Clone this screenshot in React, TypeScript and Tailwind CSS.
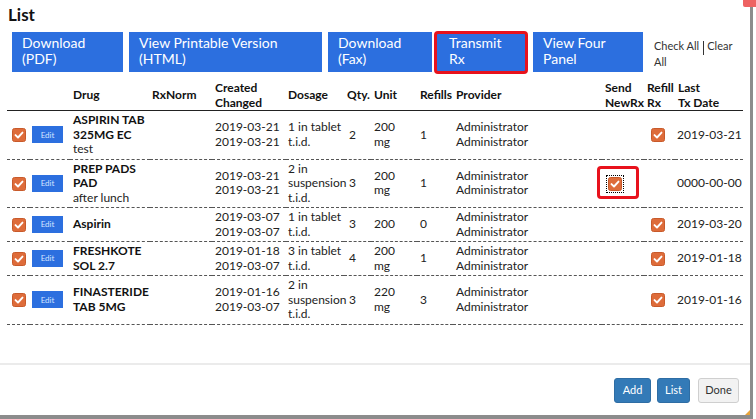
import React from 'react';

type Row = {
    drug: string[];
    note?: string;
    created: string;
    changed: string;
    dosage: string[];
    qty: string;
    unit: string[];
    refills: string;
    send: boolean;
    refill: boolean;
    last: string;
};

const rows: Row[] = [
    { drug: ['ASPIRIN TAB', '325MG EC'], note: 'test', created: '2019-03-21', changed: '2019-03-21', dosage: ['1 in tablet', 't.i.d.'], qty: '2', unit: ['200', 'mg'], refills: '1', send: false, refill: true, last: '2019-03-21' },
    { drug: ['PREP PADS', 'PAD'], note: 'after lunch', created: '2019-03-21', changed: '2019-03-21', dosage: ['2 in', 'suspension', 't.i.d.'], qty: '3', unit: ['200', 'mg'], refills: '1', send: true, refill: false, last: '0000-00-00' },
    { drug: ['Aspirin'], created: '2019-03-07', changed: '2019-03-07', dosage: ['1 in tablet', 't.i.d.'], qty: '3', unit: ['200'], refills: '0', send: false, refill: true, last: '2019-03-20' },
    { drug: ['FRESHKOTE', 'SOL 2.7'], created: '2019-01-18', changed: '2019-03-07', dosage: ['3 in tablet', 't.i.d.'], qty: '4', unit: ['200', 'mg'], refills: '1', send: false, refill: true, last: '2019-01-18' },
    { drug: ['FINASTERIDE', 'TAB 5MG'], created: '2019-01-16', changed: '2019-03-07', dosage: ['2 in', 'suspension', 't.i.d.'], qty: '3', unit: ['220', 'mg'], refills: '3', send: false, refill: true, last: '2019-01-16' },
];

const Check = ({ focused = false }: { focused?: boolean }) => (
    <span className={`inline-flex align-middle ${focused ? 'outline-1 outline-dotted outline-black outline-offset-1' : ''}`}>
        <svg width="14" height="14" viewBox="0 0 14 14">
            <rect x="0.5" y="0.5" width="13" height="13" rx="2" fill="#de6c3a" stroke="#c85a2b" />
            <path d="M3.5 7.1 L6 9.5 L10.5 4.6" fill="none" stroke="#fff" strokeWidth="1.9" strokeLinecap="round" strokeLinejoin="round" />
        </svg>
    </span>
);

const td = 'border-b border-dashed border-[#555] py-[2px] align-middle';

export default function App() {
    return (
        <div className="relative w-[756px] h-[419px] bg-white overflow-hidden font-['Lato',sans-serif] text-[#222]">
            <div className="flex flex-col w-[753px] h-[419px] border-r-[3px] border-b-[4px] border-[#8c8c8c] bg-white">
                {/* title */}
                <div className="pl-[8px] pt-[4px] h-[32px] text-[17px] font-bold leading-[22px] text-[#111]">List</div>

                {/* action buttons */}
                <div className="flex items-center h-[40px] pl-[12px]">
                    <div className="w-[111px] h-[40px] bg-[#2c6fdf] text-white text-[14px] leading-[16px] pt-[3px] pl-[10px]">Download<br />(PDF)</div>
                    <div className="ml-[6px] w-[193px] h-[40px] bg-[#2c6fdf] text-white text-[14px] leading-[16px] pt-[3px] pl-[10px]">View Printable Version<br />(HTML)</div>
                    <div className="ml-[6px] w-[104px] h-[40px] bg-[#2c6fdf] text-white text-[14px] leading-[16px] pt-[3px] pl-[10px]">Download<br />(Fax)</div>
                    <div className="ml-[2px] w-[94px] h-[43px] border-[3px] border-[#e8121c] rounded-[4px] bg-[#2c6fdf] text-white text-[14px] leading-[16px] pt-[1px] pl-[12px]">Transmit<br />Rx</div>
                    <div className="ml-[5px] w-[110px] h-[40px] bg-[#2c6fdf] text-white text-[14px] leading-[16px] pt-[3px] pl-[10px]">View Four<br />Panel</div>
                    <div className="ml-[11px] mt-[3px] w-[86px] text-[11px] leading-[13px] text-[#333]">
                        <span>Check All</span>
                        <span className="inline-block w-px h-[14px] bg-[#333] align-middle ml-[4px] mr-[3px]"></span>
                        <span>Clear All</span>
                    </div>
                </div>

                {/* table */}
                <table className="ml-[7px] mt-[9px] w-[736px] table-fixed border-collapse text-[12px] leading-[14.5px]">
                    <colgroup>
                        <col className="w-[23px]" />
                        <col className="w-[40px]" />
                        <col className="w-[80px]" />
                        <col className="w-[62px]" />
                        <col className="w-[74px]" />
                        <col className="w-[58px]" />
                        <col className="w-[27px]" />
                        <col className="w-[46px]" />
                        <col className="w-[36px]" />
                        <col className="w-[149px]" />
                        <col className="w-[42px]" />
                        <col className="w-[31px]" />
                        <col className="w-[68px]" />
                    </colgroup>
                    <thead>
                        <tr className="text-left font-bold text-[#111]">
                            <th className="border-b border-[#222] pt-[1px] pb-[3px]"></th>
                            <th className="border-b border-[#222]"></th>
                            <th className="border-b border-[#222] pl-[3px] align-middle">Drug</th>
                            <th className="border-b border-[#222] pl-[2px] align-middle">RxNorm</th>
                            <th className="border-b border-[#222] pl-[3px] align-middle">Created<br />Changed</th>
                            <th className="border-b border-[#222] pl-[2px] align-middle">Dosage</th>
                            <th className="border-b border-[#222] pl-[3px] align-middle">Qty.</th>
                            <th className="border-b border-[#222] pl-[3px] align-middle">Unit</th>
                            <th className="border-b border-[#222] pl-[3px] align-middle">Refills</th>
                            <th className="border-b border-[#222] pl-[3px] align-middle">Provider</th>
                            <th className="border-b border-[#222] pl-[3px] align-middle">Send<br />NewRx</th>
                            <th className="border-b border-[#222] pl-[3px] align-middle">Refill<br />Rx</th>
                            <th className="border-b border-[#222] pl-[3px] align-middle">Last<br />Tx Date</th>
                        </tr>
                    </thead>
                    <tbody>
                        {rows.map((r, i) => (
                            <tr key={i}>
                                <td className={`${td} pl-[5px]`}><Check /></td>
                                <td className={`${td} pl-[2px]`}>
                                    <span className="flex items-center justify-center w-[31px] h-[17px] bg-[#2c6fdf] text-[8px] text-[#d5e3ff]">Edit</span>
                                </td>
                                <td className={`${td} pl-[3px]`}>
                                    {r.drug.map((d) => <div key={d} className="font-bold text-[#111]">{d}</div>)}
                                    {r.note && <div>{r.note}</div>}
                                </td>
                                <td className={td}></td>
                                <td className={`${td} pl-[3px]`}>
                                    <div>{r.created}</div>
                                    <div>{r.changed}</div>
                                </td>
                                <td className={`${td} pl-[2px]`}>
                                    {r.dosage.map((d) => <div key={d}>{d}</div>)}
                                </td>
                                <td className={`${td} pl-[5px]`}>{r.qty}</td>
                                <td className={`${td} pl-[3px]`}>
                                    {r.unit.map((u) => <div key={u}>{u}</div>)}
                                </td>
                                <td className={`${td} pl-[3px]`}>{r.refills}</td>
                                <td className={`${td} pl-[3px]`}>
                                    <div>Administrator</div>
                                    <div>Administrator</div>
                                </td>
                                <td className={`${td} pl-[6px]`}>
                                    {r.send && (
                                        <div className="relative">
                                            <Check focused />
                                            <span className="absolute left-[-11px] top-[-10px] w-[42px] h-[33px] border-[3px] border-[#e8121c] rounded-[4px]"></span>
                                        </div>
                                    )}
                                </td>
                                <td className={`${td} pl-[7px]`}>{r.refill && <Check />}</td>
                                <td className={`${td} pl-[2px]`}>{r.last}</td>
                            </tr>
                        ))}
                    </tbody>
                </table>

                <div className="flex-1"></div>

                {/* footer */}
                <div className="flex items-center justify-end h-[52px] border-t-[2px] border-[#ebebeb] pr-[11px] text-[11px]">
                    <div className="flex items-center justify-center w-[37px] h-[25px] rounded-[3px] bg-[#337ab7] border border-[#2e6da4] text-white">Add</div>
                    <div className="ml-[6px] flex items-center justify-center w-[33px] h-[25px] rounded-[3px] bg-[#337ab7] border border-[#2e6da4] text-white">List</div>
                    <div className="ml-[8px] flex items-center justify-center w-[41px] h-[25px] rounded-[3px] bg-[#f2f2f2] border border-[#cfcfcf] text-[#333]">Done</div>
                </div>
            </div>

            {/* close button peeking at the top right */}
            <div className="absolute left-[743px] top-0 w-[13px] h-[7px] bg-[#ee6262] rounded-bl-[2px]"></div>
            {/* resize grip */}
            <svg className="absolute left-[745px] top-[410px]" width="5" height="5" viewBox="0 0 5 5">
                <path d="M5 0 L5 5 L0 5 Z" fill="#e8a33a" />
            </svg>
        </div>
    );
}
